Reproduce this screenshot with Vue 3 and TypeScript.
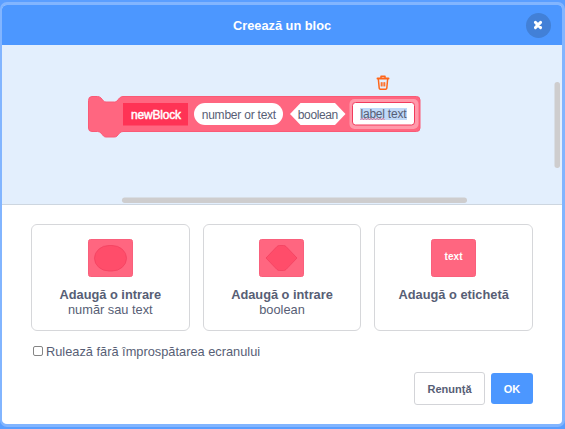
<script setup lang="ts">
import { ref } from 'vue'

interface Option {
  kind: 'oval' | 'diamond' | 'label'
  title: string
  subtitle?: string
}

const options: Option[] = [
  { kind: 'oval', title: 'Adaugă o intrare', subtitle: 'număr sau text' },
  { kind: 'diamond', title: 'Adaugă o intrare', subtitle: 'boolean' },
  { kind: 'label', title: 'Adaugă o etichetă' },
]

const warp = ref(false)
</script>

<template>
  <div class="backdrop">
    <div class="modal">
      <header class="header">
        <span class="title">Creează un bloc</span>
        <button class="close" aria-label="Închide">
          <svg width="10" height="10" viewBox="0 0 10 10">
            <path d="M2.4 2.4 L7.6 7.6 M7.6 2.4 L2.4 7.6" stroke="#fff" stroke-width="2.9" stroke-linecap="round" />
          </svg>
        </button>
      </header>

      <div class="workspace">
        <svg class="canvas" width="560" height="159" viewBox="2 45 560 159">
          <path
            d="M88.5 100.5 Q88.5 96.500 92 96.500 H97.500 Q99.500 96.500 101 98 L103.500 101 Q104.500 102 106 102 H114.500 Q116 102 117 101 L119.500 98 Q121 96.500 123 96.500 H416.500 Q420 96.500 420 100 V128 Q420 131.500 416.500 131.500 H123 Q121 131.500 119.500 133 L117 136 Q116 137 114.500 137 H106 Q104.500 137 103.500 136 L101 133 Q99.500 131.500 97.500 131.500 H92 Q88.500 131.500 88.500 128 Z"
            fill="#ff6680" stroke="#fa5a76"
          />
          <rect x="123" y="103" width="65" height="22.500" fill="#ff3355" />
          <text x="131" y="119" textLength="50" class="name">newBlock</text>
          <rect x="194" y="103" width="89" height="22" rx="11" fill="#fff" />
          <text x="201.700" y="119" textLength="74.500">number or text</text>
          <path d="M290 114 L300.500 103 H335 L345.500 114 L335 125 H300.500 Z" fill="#fff" />
          <text x="297.800" y="119" textLength="40.500">boolean</text>
          <rect x="349.500" y="99" width="69" height="30" rx="5" fill="#ff99aa" />
          <rect x="352.500" y="102.500" width="62" height="22.500" rx="3" fill="#fff" stroke="#f23a5c" />
          <rect x="360" y="108" width="47" height="12" fill="#c0d9f8" />
          <text x="360.500" y="118" textLength="46">label text</text>
          <path d="M360.500 119.500 l1.500 -1 l1.500 1 l1.500 -1 l1.500 1 l1.500 -1 l1.500 1 l1.500 -1 l1.500 1 l1.500 -1 l1.500 1 l1.500 -1 l1.500 1 l1.500 -1 l1.500 1 l1.500 -1 l1.500 1" fill="none" stroke="#d9506c" stroke-width=".8" />
          <g fill="none" stroke="#ff661a" stroke-linecap="round" stroke-linejoin="round">
            <path d="M377.500 78.500 H388.500" stroke-width="1.900" />
            <path d="M381 78 V76.300 H385 V78" stroke-width="1.500" />
            <path d="M378.400 79.500 L379.200 88.100 Q379.300 89.200 380.400 89.200 H385.600 Q386.700 89.200 386.800 88.100 L387.600 79.500" stroke-width="1.500" />
            <path d="M381.300 82.500 V86 M383 82.500 V86 M384.700 82.500 V86" stroke-width="1.200" />
          </g>
          <rect x="554.500" y="82" width="5.500" height="86" rx="2.700" fill="#cecdce" />
          <rect x="122" y="197.500" width="345" height="5.500" rx="2.700" fill="#cecdce" />
        </svg>
      </div>

      <div class="body">
        <div class="options">
          <div v-for="(option, index) in options" :key="index" class="option" role="button">
            <svg class="icon" width="45" height="38" viewBox="0 0 45 38">
              <rect x=".5" y=".5" width="44" height="37" rx="2" fill="#ff6680" stroke="#f9607c" />
              <rect v-if="option.kind === 'oval'" x="6.500" y="6.500" width="32" height="25.500" rx="14.500" ry="12.750" fill="#ff4d6a" stroke="#f2415f" stroke-width=".8" />
              <path v-else-if="option.kind === 'diamond'" d="M7 19 L18 7.500 Q19 6.500 20.500 6.500 H24.500 Q26 6.500 27 7.500 L38 19 L27 30.500 Q26 31.500 24.500 31.500 H20.500 Q19 31.500 18 30.500 Z" fill="#ff4d6a" stroke="#f2415f" stroke-width=".8" />
              <text v-else x="13.500" y="21" textLength="18" class="icon-text">text</text>
            </svg>
            <div class="option-title">{{ option.title }}</div>
            <div v-if="option.subtitle" class="option-sub">{{ option.subtitle }}</div>
          </div>
        </div>

        <label class="check">
          <input v-model="warp" type="checkbox" />
          <span>Rulează fără împrospătarea ecranului</span>
        </label>

        <div class="buttons">
          <button class="cancel">Renunţă</button>
          <button class="ok">OK</button>
        </div>
      </div>
    </div>
  </div>
</template>

<style>
body {
  margin: 0;
  overflow: hidden;
}
</style>

<style scoped>
.backdrop {
  box-sizing: border-box;
  width: 565px;
  height: 429px;
  padding: 2px 0;
  background: #5a9eff;
  font-family: 'Liberation Sans', Arial, sans-serif;
  color: #575e75;
}
.modal {
  box-sizing: border-box;
  height: 425px;
  border: 3px solid #82b5ff;
  border-left-width: 2px;
  border-radius: 7px;
  background: #fff;
  overflow: hidden;
}
.header {
  display: grid;
  grid-template-columns: 1fr auto 1fr;
  align-items: center;
  height: 40px;
  background: #4c97ff;
}
.title {
  grid-column: 2;
  font-size: 12.8px;
  font-weight: bold;
  color: #fff;
}
.close {
  display: flex;
  align-items: center;
  justify-content: center;
  justify-self: end;
  width: 25px;
  height: 25px;
  margin-right: 11.500px;
  padding: 0;
  border: 0;
  border-radius: 50%;
  background: #4280d7;
}
.workspace {
  height: 159px;
  border-bottom: 1px solid #cdd6e0;
  background: #e3effd;
}
.canvas {
  display: block;
}
.canvas text {
  font-size: 12px;
  fill: #575e75;
}
.canvas .name {
  fill: #fff;
  stroke: #fff;
  stroke-width: .45;
}
.body {
  padding: 19px 29px 0;
}
.options {
  display: grid;
  grid-template-columns: repeat(3, 1fr);
  gap: 13px;
}
.option {
  box-sizing: border-box;
  display: flex;
  flex-direction: column;
  align-items: center;
  height: 107px;
  padding-top: 14px;
  border: 1px solid #d6d7da;
  border-radius: 6px;
  line-height: 15px;
  font-size: 12.8px;
  white-space: nowrap;
}
.icon {
  flex: none;
  margin-bottom: 10px;
}
.icon-text {
  font-size: 10px;
  font-weight: bold;
  fill: #fff;
}
.option-title {
  font-weight: bold;
}
.check {
  display: flex;
  align-items: center;
  gap: 3px;
  height: 16px;
  margin: 12px 0 0 2px;
  font-size: 12.8px;
}
.check input {
  appearance: none;
  box-sizing: border-box;
  width: 10px;
  height: 10px;
  margin: 0;
  border: 1px solid #858585;
  border-radius: 2px;
  background: #fff;
}
.buttons {
  display: flex;
  align-items: center;
  justify-content: flex-end;
  gap: 6px;
  margin-top: 13px;
}
.buttons button {
  box-sizing: border-box;
  padding: 0;
  border-radius: 3px;
  font-family: inherit;
  font-size: 11px;
  font-weight: bold;
}
.cancel {
  width: 71px;
  height: 33px;
  border: 1px solid #d3d4d8;
  background: #fff;
  color: #575e75;
}
.ok {
  width: 42px;
  height: 31px;
  border: 0;
  background: #4c97ff;
  color: #fff;
}
</style>
